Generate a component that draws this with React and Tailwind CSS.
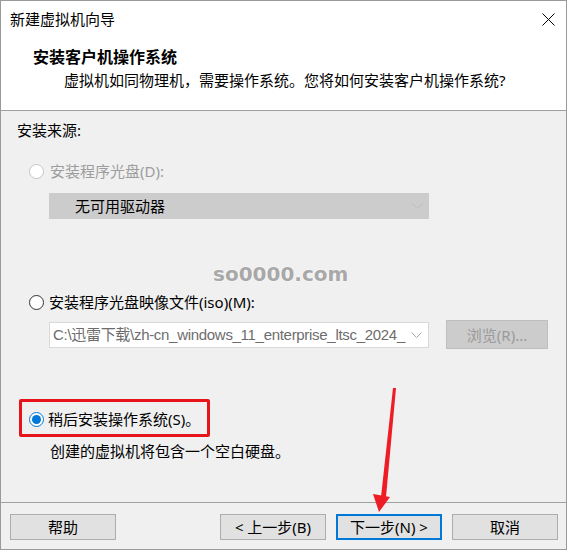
import React from 'react';

const font = { fontFamily: '"Noto Sans", "Noto Sans CJK SC", sans-serif' };

const Radio = ({ state }) => {
    if (state === 'checked') {
        return (
            <span className="w-[15px] h-[15px] rounded-full border border-[#0078d7] bg-white flex items-center justify-center shrink-0">
                <span className="w-[9px] h-[9px] rounded-full bg-[#0078d7]" />
            </span>
        );
    }
    const border = state === 'disabled' ? 'border-[#c6c6c6]' : 'border-[#333333]';
    return <span className={`w-[15px] h-[15px] rounded-full border bg-white shrink-0 ${border}`} />;
};

const Chevron = ({ color }) => (
    <svg width="11" height="6" viewBox="0 0 11 6" className="shrink-0">
        <path d="M0.5 0.5 L5.5 5.5 L10.5 0.5" fill="none" stroke={color} strokeWidth="1" />
    </svg>
);

const Button = ({ children, primary }) => (
    <button
        className={`h-[26px] flex items-center justify-center bg-[#e1e1e1] text-[15px] leading-[20px] text-black ${primary ? 'w-[106px] border-2 border-[#0078d7]' : 'w-[106px] border border-[#adadad]'}`}
    >
        {children}
    </button>
);

export default function App() {
    return (
        <div className="w-[570px] h-[551px] bg-white relative" style={font}>
            <div className="w-[567px] h-[550px] border border-[#9a9a9a] bg-[#f0f0f0] flex flex-col">
                {/* title bar */}
                <div className="h-[36px] bg-white flex items-center justify-between pl-[9px] pr-[11px] shrink-0">
                    <span className="text-[15px] leading-[20px] text-black">新建虚拟机向导</span>
                    <svg width="13" height="13" viewBox="0 0 13 13">
                        <path d="M0.5 0.5 L12.5 12.5 M12.5 0.5 L0.5 12.5" stroke="#000" strokeWidth="1" />
                    </svg>
                </div>

                {/* header */}
                <div className="h-[74px] bg-white border-b border-[#a0a0a0] shrink-0 pl-[32px] pt-[10px]">
                    <div className="text-[16px] leading-[20px] font-bold text-black">安装客户机操作系统</div>
                    <div className="text-[15px] leading-[20px] text-black pl-[31px] mt-[3px]">
                        虚拟机如同物理机，需要操作系统。您将如何安装客户机操作系统?
                    </div>
                </div>

                {/* body */}
                <div className="flex-1 relative pl-[16px] pt-[9px]">
                    <div className="text-[15px] leading-[20px] text-black">安装来源:</div>

                    <div className="flex items-center gap-[6px] mt-[21px] pl-[12px] h-[20px]">
                        <Radio state="disabled" />
                        <span className="text-[15px] leading-[20px] text-[#9d9d9d]">安装程序光盘(D):</span>
                    </div>

                    <div className="ml-[32px] mt-[12px] w-[380px] h-[26px] bg-[#cccccc] flex items-center justify-between pl-[26px] pr-[6px]">
                        <span className="text-[15px] leading-[20px] text-black">无可用驱动器</span>
                        <Chevron color="#bdbdbd" />
                    </div>

                    <div className="flex items-center gap-[5px] mt-[73px] pl-[12px] h-[20px]">
                        <Radio state="normal" />
                        <span className="text-[15px] leading-[20px] text-black">安装程序光盘映像文件(iso)(M):</span>
                    </div>

                    <div className="flex items-center ml-[32px] mt-[8px]">
                        <div className="w-[380px] h-[26px] bg-white border border-[#d9d9d9] flex items-center justify-between pl-[3px] pr-[6px]">
                            <span
                                className="text-[15px] leading-[20px] text-[#6d6d6d] whitespace-nowrap tracking-[-0.3px]"
                                style={{ fontFamily: '"Liberation Sans", "Noto Sans CJK SC", sans-serif' }}
                            >
                                C:\迅雷下载\zh-cn_windows_11_enterprise_ltsc_2024_
                            </span>
                            <Chevron color="#a8a8a8" />
                        </div>
                        <div className="ml-[17px] w-[102px] h-[29px] bg-[#cccccc] border border-[#bfbfbf] flex items-center justify-center">
                            <span className="text-[15px] leading-[20px] text-[#9a9a9a]">浏览(R)...</span>
                        </div>
                    </div>

                    <div className="relative flex items-center gap-[4px] mt-[60px] pl-[12px] h-[20px] w-fit">
                        <Radio state="checked" />
                        <span className="text-[15px] leading-[20px] text-black">稍后安装操作系统(S)。</span>
                        <div className="absolute left-[2px] top-[-10px] w-[191px] h-[38px] border-[3px] border-[#e8141c] rounded-[2px]" />
                    </div>
                    <div className="text-[15px] leading-[20px] text-black pl-[33px] mt-[12px]">创建的虚拟机将包含一个空白硬盘。</div>

                    {/* watermark */}
                    <div
                        className="absolute left-[212px] top-[151px] text-[20px] leading-[24px] font-bold text-[#a8a8a8]"
                        style={{ fontFamily: '"DejaVu Sans", sans-serif', textShadow: '0 0 2px #fff, 0 0 1px #fff' }}
                    >
                        so0000.com
                    </div>
                </div>

                {/* footer */}
                <div className="h-[47px] border-t border-[#a0a0a0] shrink-0 flex items-start justify-between pl-[9px] pr-[8px] pt-[11px]">
                    <Button>帮助</Button>
                    <div className="flex gap-[10px]">
                        <Button>&lt; 上一步(B)</Button>
                        <Button primary>下一步(N) &gt;</Button>
                        <Button>取消</Button>
                    </div>
                </div>
            </div>

            {/* annotation arrow */}
            <svg className="absolute left-0 top-0 pointer-events-none" width="570" height="551">
                <polygon points="393,388 396,388 386,497 381,497" fill="#ee1c25" />
                <polygon points="373,494 390,497 379,512" fill="#ee1c25" />
            </svg>
        </div>
    );
}
